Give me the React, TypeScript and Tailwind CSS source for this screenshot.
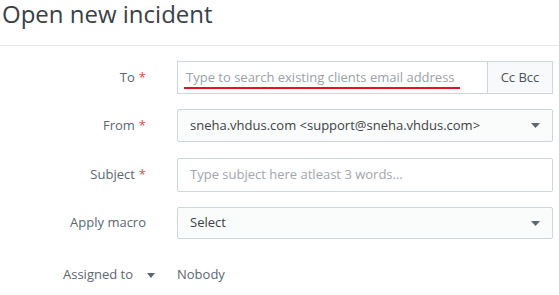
import { ReactNode } from "react";

function Caret({ w = 9 }: { w?: number }) {
  return (
    <svg width={w} height="5" viewBox="0 0 9 5" preserveAspectRatio="none" className="shrink-0">
      <path d="M0 0h9L4.5 5z" fill="#5b6670" />
    </svg>
  );
}

function Row({
  label,
  required,
  className,
  children,
}: {
  label: ReactNode;
  required?: boolean;
  className: string;
  children: ReactNode;
}) {
  return (
    <div className={`flex items-center ${className}`}>
      <div className="w-[146px] text-right text-[13px] text-[#5c6670] shrink-0">
        {label}
        {required && <span className="text-[#ef4444] ml-1">*</span>}
      </div>
      <div className="ml-[31px] w-[376px] h-full">{children}</div>
    </div>
  );
}

export default function App() {
  return (
    <div className="w-[559px] h-[295px] bg-white overflow-hidden font-['Open_Sans',sans-serif]">
      <div className="h-[46px] border-b border-[#e3e8ec] pl-[2px]">
        <h1 className="text-[24px] leading-[28px] text-[#3a4047]">Open new incident</h1>
      </div>

      <div className="pt-[15px]">
        <Row label="To" required className="h-[33px] mb-[15px]">
          <div className="flex h-full">
            <div className="relative flex-1 border border-[#cdd5dd] flex items-center pl-[8px]">
              <span className="text-[13px] text-[#9aa1a8]">Type to search existing clients email address</span>
              <span className="absolute left-[6px] top-[25px] w-[276px] h-[2px] bg-[#e3131f]" />
            </div>
            <button className="w-[65px] border border-l-0 border-[#cdd5dd] bg-[#f8f9fa] text-[13px] text-[#4a525a]">
              Cc Bcc
            </button>
          </div>
        </Row>

        <Row label="From" required className="h-[33px] mb-[16px]">
          <div className="h-full border border-[#cdd5dd] rounded-[2px] bg-[#fafbfb] flex items-center justify-between pl-[12px] pr-[12px]">
            <span className="text-[13px] text-[#3b4249]">sneha.vhdus.com &lt;support@sneha.vhdus.com&gt;</span>
            <Caret />
          </div>
        </Row>

        <Row label="Subject" required className="h-[34px] mb-[15px]">
          <div className="h-full border border-[#cdd5dd] rounded-[2px] flex items-center pl-[12px]">
            <span className="text-[13px] text-[#a0a6ac]">Type subject here atleast 3 words...</span>
          </div>
        </Row>

        <Row label="Apply macro" className="h-[32px]">
          <div className="h-full border border-[#cdd5dd] rounded-[2px] bg-[#fafbfb] flex items-center justify-between pl-[12px] pr-[12px]">
            <span className="text-[13px] text-[#3b4249]">Select</span>
            <Caret />
          </div>
        </Row>

        <div className="flex items-center h-8 mt-[20px]">
          <div className="w-[146px] shrink-0 flex justify-end items-center text-[13px] text-[#5c6670]">
            <span className="-mr-[9px] flex items-center">
              Assigned to
              <span className="ml-[14px]">
                <Caret w={8} />
              </span>
            </span>
          </div>
          <div className="ml-[31px] text-[13px] text-[#5c6670]">Nobody</div>
        </div>
      </div>
    </div>
  );
}
